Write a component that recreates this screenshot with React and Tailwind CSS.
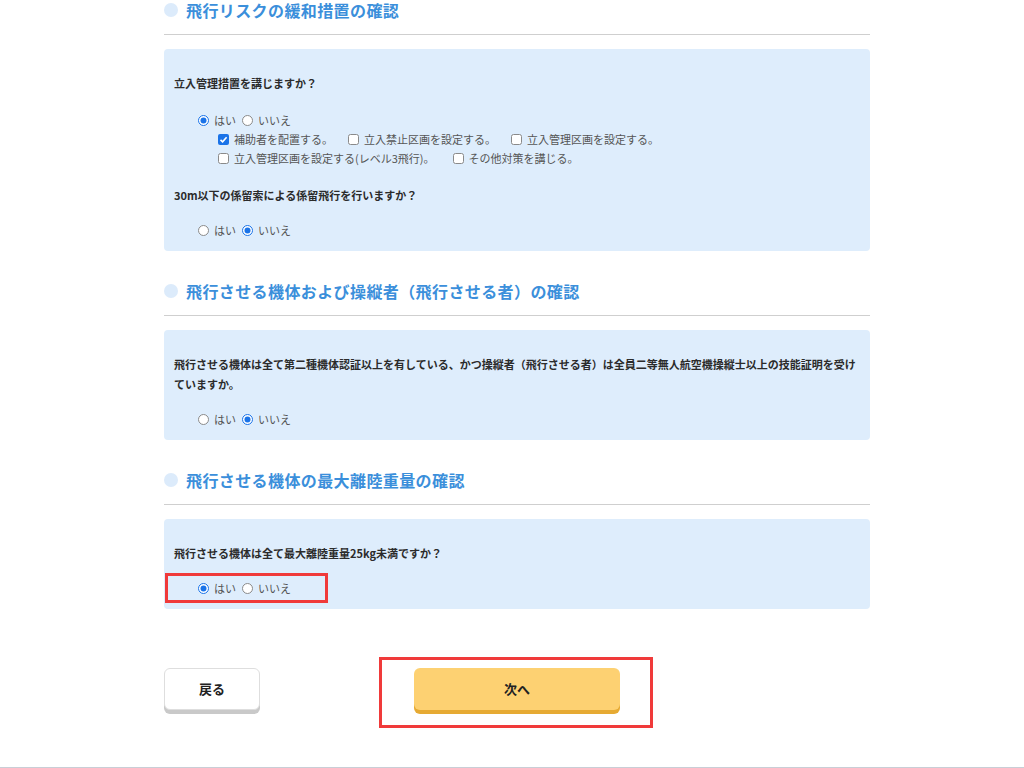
function Radio({ checked }) {
  return checked ? (
    <svg width="11" height="11" viewBox="0 0 11 11" className="shrink-0">
      <circle cx="5.5" cy="5.5" r="5" fill="#fff" stroke="#1a73e8" strokeWidth="1" />
      <circle cx="5.5" cy="5.5" r="3" fill="#1a73e8" />
    </svg>
  ) : (
    <svg width="11" height="11" viewBox="0 0 11 11" className="shrink-0">
      <circle cx="5.5" cy="5.5" r="5" fill="#fff" stroke="#8a8a8a" strokeWidth="1" />
    </svg>
  )
}

function Check({ checked, label }) {
  return (
    <span className="flex items-center gap-[5px]">
      {checked ? (
        <svg width="11" height="11" viewBox="0 0 11 11" className="shrink-0">
          <rect x="0" y="0" width="11" height="11" rx="2" fill="#1a73e8" />
          <path d="M2.5 5.8 L4.6 7.8 L8.6 3.2" fill="none" stroke="#fff" strokeWidth="1.6" />
        </svg>
      ) : (
        <svg width="11" height="11" viewBox="0 0 11 11" className="shrink-0">
          <rect x="0.5" y="0.5" width="10" height="10" rx="2" fill="#fff" stroke="#8a8a8a" strokeWidth="1" />
        </svg>
      )}
      <span>{label}</span>
    </span>
  )
}

function YesNo({ yes }) {
  return (
    <div className="flex items-center text-[11px] text-[#555]">
      <Radio checked={yes} />
      <span className="ml-[5px]">はい</span>
      <span className="ml-[6px]"><Radio checked={!yes} /></span>
      <span className="ml-[5px]">いいえ</span>
    </div>
  )
}

function RadioRow({ yes, marked }) {
  return (
    <div
      className={
        'mt-[10px] -ml-[9px] w-[163px] h-[30px] border-[3px] flex items-center pl-[30px] ' +
        (marked ? 'border-[#f03a3a]' : 'border-transparent')
      }
    >
      <YesNo yes={yes} />
    </div>
  )
}

function Section({ title, first, children }) {
  return (
    <section className={first ? '' : 'mt-[30px]'}>
      <div className="h-5 flex items-center gap-2">
        <span className="w-[14px] h-[14px] rounded-full bg-[#dcebfb]" />
        <h2 className="text-[16px] leading-5 font-bold tracking-[0.4px] text-[#3b8fdb]">{title}</h2>
      </div>
      <div className="mt-[14px] h-px bg-[#cfcfcf]" />
      <div className="mt-[14px] bg-[#deedfc] rounded-[4px] px-[10px] pt-[24px] pb-[6px]">{children}</div>
    </section>
  )
}

function Question({ children, className = '' }) {
  return <p className={'text-[11px] leading-5 font-bold text-[#2b2b2b] ' + className}>{children}</p>
}

export default function App() {
  return (
    <div className="h-[768px] bg-white overflow-hidden flex flex-col font-['Noto_Sans_CJK_JP','Noto_Sans',sans-serif]">
      <div className="ml-[164px] w-[706px]">
        <Section title="飛行リスクの緩和措置の確認" first>
          <Question>立入管理措置を講じますか？</Question>
          <div className="mt-[17px] h-5 flex items-center pl-[24px]">
            <YesNo yes />
          </div>
          <div className="h-[19px] flex items-center gap-x-[15px] pl-[44px] text-[11px] text-[#555]">
            <Check checked label="補助者を配置する。" />
            <Check label="立入禁止区画を設定する。" />
            <Check label="立入管理区画を設定する。" />
          </div>
          <div className="h-[19px] flex items-center gap-x-[18px] pl-[44px] text-[11px] text-[#555]">
            <Check label="立入管理区画を設定する(レベル3飛行)。" />
            <Check label="その他対策を講じる。" />
          </div>
          <Question className="mt-[17px]">30m以下の係留索による係留飛行を行いますか？</Question>
          <RadioRow yes={false} />
        </Section>

        <Section title="飛行させる機体および操縦者（飛行させる者）の確認">
          <Question>
            <span className="block whitespace-nowrap">
              飛行させる機体は全て第二種機体認証以上を有している、かつ操縦者（飛行させる者）は全員二等無人航空機操縦士以上の技能証明を受け
            </span>
            <span className="block">ていますか。</span>
          </Question>
          <RadioRow yes={false} />
        </Section>

        <Section title="飛行させる機体の最大離陸重量の確認">
          <Question>飛行させる機体は全て最大離陸重量25kg未満ですか？</Question>
          <RadioRow yes marked />
        </Section>

        <div className="mt-[48px] flex items-start">
          <button className="mt-[11px] w-[96px] h-[42px] rounded-[6px] bg-white border border-[#dedede] shadow-[0_4px_0_#c9c9c9] text-[13px] font-bold text-[#222] flex items-center justify-center">
            戻る
          </button>
          <div className="ml-[119px] border-[3px] border-[#f03a3a] pt-[8px] pb-[15px] pl-[32px] pr-[30px]">
            <button className="w-[206px] h-[42px] rounded-[6px] bg-[#fdd172] shadow-[0_4px_0_#e6aa33] text-[13px] font-bold text-[#222] flex items-center justify-center">
              次へ
            </button>
          </div>
        </div>
      </div>
      <div className="flex-1" />
      <div className="h-px bg-[#c9ced6]" />
    </div>
  )
}
